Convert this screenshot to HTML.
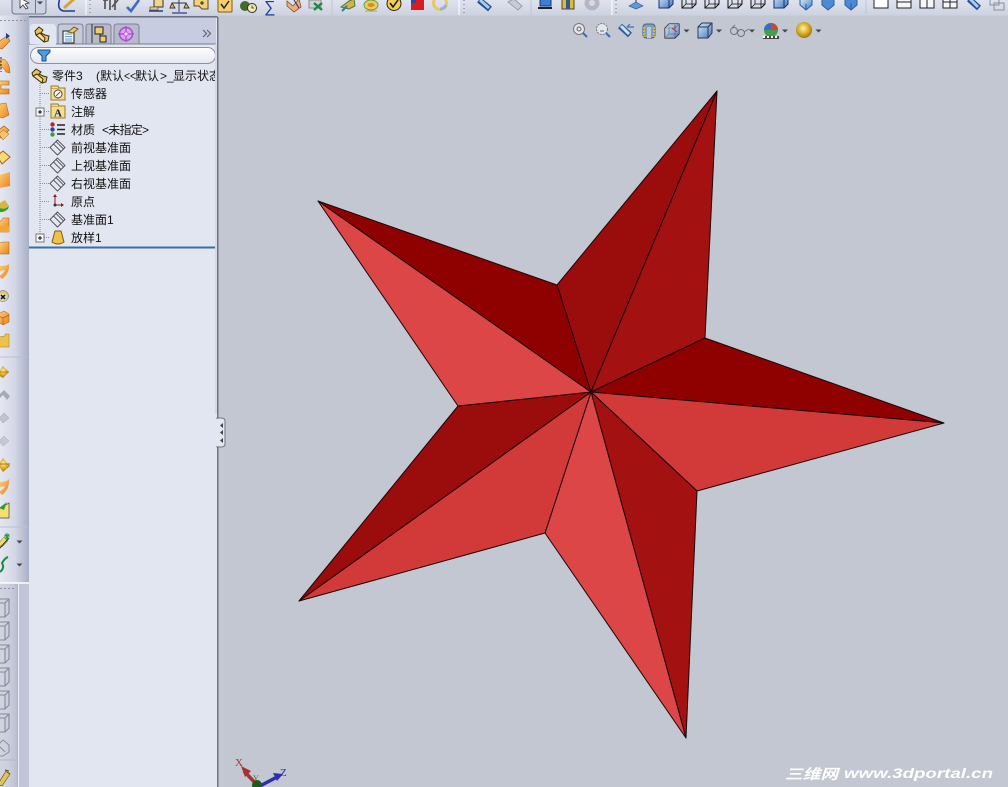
<!DOCTYPE html>
<html><head><meta charset="utf-8"><style>
html,body{margin:0;padding:0;width:1008px;height:787px;overflow:hidden;background:#c3c7d2}
svg{display:block}
text{font-family:"Liberation Sans","WenQuanYi Zen Hei","Noto Sans CJK SC",sans-serif;font-size:12px;fill:#111}
</style></head><body>
<svg width="1008" height="787" viewBox="0 0 1008 787" xmlns="http://www.w3.org/2000/svg">
<defs>
<clipPath id="treeclip"><rect x="29" y="60" width="187" height="190"/></clipPath>
<linearGradient id="side" x1="0" x2="1" y1="0" y2="0"><stop offset="0" stop-color="#e4e7f1"/><stop offset=".5" stop-color="#d4d8e6"/><stop offset="1" stop-color="#a9afc6"/></linearGradient>
<linearGradient id="top" x1="0" x2="0" y1="0" y2="1"><stop offset="0" stop-color="#dfe3ee"/><stop offset="1" stop-color="#cdd2e0"/></linearGradient>
<linearGradient id="bl" x1="0" x2="1" y1="0" y2="1"><stop offset="0" stop-color="#dbe8f8"/><stop offset="1" stop-color="#3f78c4"/></linearGradient>
<linearGradient id="or" x1="0" x2="1" y1="0" y2="1"><stop offset="0" stop-color="#ffd27a"/><stop offset="1" stop-color="#e8801a"/></linearGradient>
<radialGradient id="gold" cx=".45" cy=".4" r=".6"><stop offset="0" stop-color="#fff2a8"/><stop offset=".6" stop-color="#d8a722"/><stop offset="1" stop-color="#9e7612"/></radialGradient>
<linearGradient id="filt" x1="0" x2="0" y1="0" y2="1"><stop offset="0" stop-color="#fff"/><stop offset="1" stop-color="#e4e7f0"/></linearGradient>
<g id="cube"><path d="M-7,-3 L-3,-7 H7 V3 L3,7 H-7Z" fill="url(#bl)" stroke="#16306a"/><path d="M-7,-3 H3 V7 M3,-3 L7,-7" fill="none" stroke="#16306a"/></g>
<g id="wire"><path d="M-7,-3 L-3,-7 H7 V3 L3,7 H-7Z" fill="none" stroke="#111"/><path d="M-7,-3 H3 V7 M3,-3 L7,-7 M-3,-7 V3 H7 M-3,3 L-7,7" fill="none" stroke="#111" stroke-width=".8"/></g>
<g id="grey"><path d="M-9,-4 L-5,-8 H5 V6 L1,10 H-9Z M-9,-4 H1 V10 M1,-4 L5,-8" fill="none" stroke="#858a98" stroke-width="1.100"/></g>
<g id="plane"><path d="M0,-7.500 L7.500,0 L0,7.500 L-7.500,0Z M-4,-3.500 L3.500,4 M-1.500,-6 L6,1.500" fill="none" stroke="#333" stroke-width=".8"/></g>
<g id="oran"><path d="M-7,-2 L1,-8 L6,-4 L-1,4 L-6,3Z" fill="url(#or)" stroke="#a85f10" stroke-width=".7"/></g>
<g id="drop"><path d="M-3,-1.500 H3 L0,1.500Z" fill="#444"/></g>
</defs>

<rect width="1008" height="787" fill="#c3c7d2"/>

<!-- top toolbar -->
<rect width="1008" height="15.500" fill="url(#top)"/>
<rect x="12" y="-3" width="34" height="17" rx="3" fill="#ccd2e4" stroke="#6f7486"/>
<path d="M35.500,-2 V13" stroke="#6f7486"/>
<path d="M20,-2 L20,8 L23,5 L26,9 L28,8 L25,4 L29,3Z" fill="#fff" stroke="#333" stroke-width=".8"/>
<use href="#drop" x="40" y="3"/>
<path d="M60,-2 Q56,10 64,11 H75" fill="none" stroke="#1b3d9b" stroke-width="1.600"/>
<path d="M64,8 L74,-1" stroke="#d6a23a" stroke-width="3"/>
<path d="M86,0 V15" stroke="#fff" stroke-width="1"/><path d="M90,0 V15" stroke="#777" stroke-dasharray="1 3"/>
<path d="M103,0 L108,0 M110,0 V10 M105,0 V9 M115,0 V10 M118,0 L112,7" stroke="#555" stroke-width="1.700" fill="none"/>
<path d="M127,7 L131,11 L139,0" fill="none" stroke="#3e6cc0" stroke-width="2.600"/>
<rect x="154" y="-1" width="9" height="8" fill="#f1d484" stroke="#333"/><path d="M149,11 H163" stroke="#1b3d9b" stroke-width="1.500"/><path d="M150,7 H158 V10 H150Z" fill="#e9c870" stroke="#333" stroke-width=".6"/>
<path d="M172,3 H186 M179,-1 V12 M172,3 L170,8 H175Z M186,3 L184,8 H189Z" fill="#e5b85a" stroke="#333" stroke-width=".9"/><path d="M172,13 H187" stroke="#1b3d9b" stroke-width="1.200"/>
<path d="M194,-1 H208 V9 L202,9 L199,6 H194Z" fill="#f1d27b" stroke="#5c4a14"/><path d="M200,3 H204 M202,1 V5" stroke="#222"/>
<rect x="218" y="-2" width="14" height="14" rx="1" fill="#f4cf6c" stroke="#7d5d15"/><path d="M221,4 L224,8 L229,1" fill="none" stroke="#222" stroke-width="1.500"/>
<circle cx="245" cy="6" r="5" fill="#436b2a"/><circle cx="252" cy="8" r="4.500" fill="#f5e9b5" stroke="#333"/><path d="M252,5.500 V8 H254" stroke="#222" fill="none" stroke-width=".8"/>
<text x="264" y="12" style="font-size:16px;fill:#1b3d9b">∑</text>
<path d="M287,1 L293,6 L299,-1 L301,7 L294,12 L287,6Z" fill="#e8b07a" stroke="#8b4a2a" stroke-width=".8"/><path d="M294,0 L299,8" stroke="#2c2a7a"/>
<rect x="309" y="0" width="12" height="8" fill="#ccd2d8" stroke="#8e8e8e"/><path d="M314,3 L322,10 M322,3 L314,10" stroke="#1f8a3d" stroke-width="2.400"/>
<path d="M332,0 V15" stroke="#bfc4d2"/>
<path d="M341,7 L349,1 L354,-1 L355,6 L349,9Z" fill="#d7b04c" stroke="#4a7a34"/><path d="M342,11 L347,6" stroke="#2a7bb0" stroke-width="2"/>
<ellipse cx="371" cy="5" rx="7" ry="5" fill="#e6cf54" stroke="#6aa04a"/><ellipse cx="371" cy="5" rx="3.500" ry="2" fill="#e58330"/><path d="M365,11 H377" stroke="#b9a54a"/>
<circle cx="394" cy="3.500" r="7" fill="#f4cf4d" stroke="#222"/><path d="M390,3 L393,7 L398,0" fill="none" stroke="#111" stroke-width="1.500"/>
<rect x="411" y="-1" width="7" height="11" fill="#d81c24"/><rect x="418" y="-1" width="6" height="11" fill="#d81c24"/><rect x="411" y="-1" width="5" height="4" fill="#2c4a9a"/>
<circle cx="440" cy="3" r="6.500" fill="none" stroke="#e6c86a" stroke-width="3"/><path d="M440,9 A6.500,6.500 0 0,0 446,5" stroke="#8fb6d6" stroke-width="3" fill="none"/>
<path d="M459,0 V15" stroke="#fff"/><path d="M464,0 V15" stroke="#777" stroke-dasharray="1 3"/>
<path d="M479,0 L490,9" stroke="#1f4f94" stroke-width="6"/><path d="M480,0 L489,8" stroke="#a8d0ee" stroke-width="3"/>
<path d="M508,2 L514,-1 L522,6 L518,10 Z" fill="#c9ccd6" stroke="#9a9ea9"/>
<path d="M531,0 V15" stroke="#bfc4d2"/>
<rect x="540" y="-2" width="11" height="8" fill="#3d7fd0" stroke="#143a72"/><path d="M538,8 H552" stroke="#222" stroke-width="2"/>
<rect x="562" y="-2" width="12" height="11" fill="#e0b840" stroke="#4e4a20"/><rect x="566" y="-2" width="4" height="11" fill="#2a5c8f"/>
<circle cx="592" cy="3" r="7.500" fill="#b4b7c1"/><circle cx="592" cy="3" r="3" fill="#d8dae0"/>
<path d="M612,0 V15" stroke="#fff"/><path d="M616,0 V15" stroke="#777" stroke-dasharray="1 3"/>
<path d="M636,-1 V6" stroke="#333"/><path d="M629,6 L636,2 L643,6 L636,9Z" fill="#5e9ad8" stroke="#2f5d94" stroke-width=".7"/>
<use href="#cube" x="666" y="1"/><use href="#wire" x="689" y="1"/><use href="#wire" x="712" y="1"/><use href="#wire" x="735" y="1"/><use href="#wire" x="758" y="1"/><use href="#cube" x="781" y="1"/>
<path d="M800,-1 H812 V5 L806,10 L800,5Z M806,4 V10" fill="url(#bl)" stroke="#2b5da2"/>
<path d="M822,-1 H834 V5 L828,10 L822,5Z" fill="#4d8ad2" stroke="#2b5da2"/>
<path d="M845,-1 H857 V5 L851,10 L845,5Z M851,3 V10" fill="#4d8ad2" stroke="#2b5da2"/>
<path d="M866,0 V14" stroke="#bfc4d2"/>
<rect x="874" y="-3" width="14" height="11" fill="#fff" stroke="#222"/>
<rect x="897" y="-3" width="14" height="11" fill="#f4f6fa" stroke="#222"/><path d="M897,2 H911" stroke="#222"/>
<rect x="920" y="-3" width="14" height="11" fill="#f4f6fa" stroke="#222"/><path d="M927,-3 V8" stroke="#222"/>
<rect x="943" y="-3" width="14" height="11" fill="#f4f6fa" stroke="#222"/><path d="M950,-3 V8 M943,2 H957" stroke="#222"/>
<path d="M969,-1 L979,8" stroke="#1f4f94" stroke-width="6"/><path d="M970,-1 L978,7" stroke="#a8d0ee" stroke-width="3"/>
<rect x="990" y="-2" width="9" height="7" fill="none" stroke="#8a8e9b"/><rect x="994" y="3" width="10" height="7" fill="none" stroke="#8a8e9b"/>

<!-- left strip -->
<rect x="0" y="15.500" width="29" height="568" fill="url(#side)"/>
<path d="M0,20.500 H26" stroke="#8d92a4" stroke-dasharray="2 2"/>
<g>
<path d="M-2,42 L7,36 L10,41 L2,49 L-2,48Z" fill="url(#or)" stroke="#a85f10" stroke-width=".6"/><path d="M6,33 L10,36 L6,39Z" fill="#1b3d9b"/>
<path d="M0,60 L4,59 Q10,63 10,73 L6,72 Q4,67 0,67Z" fill="url(#or)" stroke="#a85f10" stroke-width=".5"/><path d="M1,57 V72" stroke="#222" stroke-dasharray="2 1.500"/>
<path d="M-1,81 H9 V85 H1 V89 H9 V94 H-1Z" fill="url(#or)" stroke="#a85f10" stroke-width=".6"/>
<path d="M0,104 L6,103 L9,115 L3,118 L-2,117Z" fill="url(#or)" stroke="#a85f10" stroke-width=".5"/>
<use href="#oran" x="3" y="134"/><path d="M-1,134 L3,130 L9,134 L3,140Z" fill="#f5c56f" stroke="#a85f10" stroke-width=".5"/>
<path d="M-3,156 L3,151 L10,157 L2,164Z" fill="#f7dc7a" stroke="#a85f10"/>
<path d="M-1,175 L10,172 V186 L-1,188Z" fill="url(#or)"/>
<path d="M-2,204 L5,200 L9,206 Q4,212 -2,210Z" fill="#d8b645"/><path d="M-2,207 Q4,211 9,206 L8,209 Q2,214 -2,211Z" fill="#2fa12f"/>
<path d="M-1,223 L3,218 H9 V232 H-1Z" fill="url(#or)" stroke="#a85f10" stroke-width=".5"/><rect x="0" y="226" width="9" height="6" fill="#f2a63a"/>
<path d="M-1,243 L4,242 H9 V254 H-1Z" fill="url(#or)" stroke="#a85f10" stroke-width=".5"/>
<path d="M0,266 Q7,266 9,264 Q10,273 2,279 L-1,276 Q4,273 5,270 L0,271Z" fill="url(#or)"/>
<circle cx="3" cy="296" r="5.500" fill="#e4c84a" stroke="#666" stroke-width=".5"/><circle cx="3" cy="297" r="4" fill="#d6d6d6"/><path d="M1,295 L5,299 M5,295 L1,299" stroke="#111" stroke-width="1.500"/>
<path d="M-2,314 L4,311 L9,314 V322 L3,325 L-2,322Z" fill="url(#or)" stroke="#a85f10" stroke-width=".5"/><path d="M-2,316 L3,318 L9,315 M3,318 V325" stroke="#a85f10" stroke-width=".7" fill="none"/>
<path d="M-1,337 L5,336 V334 H9 V347 H-1Z" fill="#eec24a" stroke="#a87a10" stroke-width=".5"/>
<path d="M0,357 H28" stroke="#bcc0ce"/>
<path d="M-2,372 L3,366 L9,372 L3,378 L-2,375Z" fill="url(#gold)"/><path d="M-2,372 H9" stroke="#c57a15"/>
<path d="M-1,395 L4,390 L10,396 L7,400 L3,395 L0,398Z" fill="#a6aab6"/>
<path d="M-1,418 L4,413 L9,418 L3,423Z" fill="#c1c4ce" stroke="#9a9ea9" stroke-width=".5"/>
<path d="M-1,441 L4,436 L9,441 L3,446Z" fill="#c6c9d3" stroke="#a4a8b3" stroke-width=".5"/>
<path d="M-2,465 L3,458 L8,464 L10,466 L3,472Z" fill="url(#gold)"/><path d="M-2,464 H10" stroke="#b56c12"/>
<path d="M0,482 Q7,482 9,479 Q10,489 2,495 L-1,492 Q4,489 5,486 L0,487Z" fill="url(#or)"/>
<path d="M-1,509 L9,503 V518 H-1Z" fill="#f6de70" stroke="#444" stroke-width=".7"/><path d="M-1,508 L7,502 L4,510Z" fill="#2aa12a"/>
<path d="M0,527 H28" stroke="#bcc0ce"/>
<path d="M-2,544 L4,537 L8,541 L2,547Z" fill="#f2dc5a" stroke="#666" stroke-width=".5"/><path d="M-1,549 L9,538" stroke="#222"/>
<path d="M7,533 V540 M4,536 H10 M5,534 L9,539 M9,534 L5,539" stroke="#1a9a2a"/>
<use href="#drop" x="19.500" y="542"/>
<path d="M0,572 Q5,568 2,563 Q5,558 8,557 " fill="none" stroke="#1d8a3c" stroke-width="2"/>
<use href="#drop" x="19.500" y="565"/>
</g>
<path d="M0,583 H29" stroke="#fff" stroke-width="1.500"/>
<rect x="0" y="584" width="18" height="203" fill="url(#side)"/><rect x="0" y="584" width="17" height="203" fill="#c4c8d6" opacity=".6"/>
<rect x="18" y="584" width="1" height="203" fill="#eef0f6"/>
<rect x="19" y="584" width="10" height="203" fill="#c0c5d7"/>
<path d="M0,588.500 H14" stroke="#8d92a4" stroke-dasharray="2 2"/>
<use href="#grey" x="4" y="607"/><use href="#grey" x="4" y="630"/><use href="#grey" x="4" y="653"/><use href="#grey" x="4" y="676"/><use href="#grey" x="4" y="699"/><use href="#grey" x="4" y="722"/>
<path d="M-2,745 L3,740 L9,745 V752 L3,756 H-2Z M-2,745 L5,752" fill="none" stroke="#8a8e9b"/>
<path d="M0,760 H16" stroke="#b0b4c2"/>
<path d="M-2,784 L6,771 L10,774 L2,786Z" fill="#e6c35a" stroke="#5a4a15" stroke-width=".6"/><path d="M5,770 L9,771 M7,772 L10,774" stroke="#5a4a15"/>

<!-- panel -->
<rect x="29" y="18" width="188" height="769" fill="#e2e6f0"/>
<rect x="29" y="16" width="188.500" height="1.500" fill="#6b7083"/>
<rect x="29" y="18" width="187" height="26" fill="#c8cce0"/>
<rect x="29" y="43.500" width="187" height="1" fill="#777c90"/>
<path d="M30,44 V27 Q30,24 33,24 H52 Q56,24 56,28 V45Z" fill="#e2e6f0"/>
<path d="M58,44 V27 Q58,24 61,24 H80 Q83,24 83,27 V44Z" fill="#c5c9d8" stroke="#7d8294"/>
<path d="M86,44 V27 Q86,24 89,24 H108 Q111,24 111,27 V44Z" fill="#b6bacb" stroke="#7d8294"/>
<path d="M114,44 V27 Q114,24 117,24 H136 Q139,24 139,27 V44Z" fill="#b6bacb" stroke="#7d8294"/>
<!-- tab icons -->
<g stroke="#3a2f10" stroke-width="1">
<path d="M35,31 L39,27 L43,30 L41,33 L45,35 L49,36 L48,41 L44,42 L36,35Z" fill="#e8c25a"/>
<path d="M36,35 L44,42 L45,38 L40,33Z" fill="#f5dc8a"/>
</g>
<rect x="63" y="31" width="11" height="12" fill="#eef5ff" stroke="#222"/><path d="M65,34 H72 M65,36.500 H72 M65,39 H72 M65,41 H72" stroke="#2f7fcc" stroke-width=".8"/>
<path d="M68,32 L74,27 L78,29 L73,33Z" fill="#e6c878" stroke="#7a5f20"/>
<path d="M92,24 V43" stroke="#333"/>
<rect x="95" y="27" width="8" height="7" fill="#f0cc6a" stroke="#222"/><path d="M100,34 V38 H103" fill="none" stroke="#222"/><rect x="100" y="36" width="6" height="6" fill="#f0cc6a" stroke="#222"/>
<circle cx="126" cy="34" r="6.500" fill="#d8a4ee" stroke="#b04ad0" stroke-width="1.500"/><path d="M118,34 H134 M126,26 V42" stroke="#b04ad0" stroke-width="1.300"/><circle cx="126" cy="34" r="2" fill="#f2dcfa" stroke="#b04ad0" stroke-width=".7"/>
<path d="M203,30 L206.500,33.500 L203,37 M207,30 L210.500,33.500 L207,37" fill="none" stroke="#666" stroke-width="1.200"/>
<!-- filter -->
<rect x="30.500" y="47.500" width="185" height="16" rx="8" fill="url(#filt)" stroke="#8c90a0"/>
<path d="M38,50 H50 V52 L46,56 V61 H42 V56 L38,52Z" fill="#4f9ce0" stroke="#1b4a8a"/>
<!-- tree lines -->
<path d="M40,83 V238 M40,93.500 H50 M40,111.500 H50 M40,129.500 H50 M40,147.500 H50 M40,165.500 H50 M40,183.500 H50 M40,201.500 H50 M40,219.500 H50 M40,237.500 H50" stroke="#8a8e9b" stroke-dasharray="1 1" fill="none"/>
<rect x="36" y="108" width="8" height="8" fill="#f6f7fa" stroke="#777"/><path d="M38,112 H42 M40,110 V114" stroke="#111"/>
<rect x="36" y="234" width="8" height="8" fill="#f6f7fa" stroke="#777"/><path d="M38,238 H42 M40,236 V240" stroke="#111"/>
<!-- tree icons -->
<g stroke="#3a2f10" stroke-width="1">
<path d="M32,73 L36,69 L41,72 L39,74 L43,76 L47,77 L46,82 L42,83 L33,76Z" fill="#e8c25a"/>
<path d="M33,76 L42,83 L43,79 L37,74Z" fill="#f5dc8a"/>
</g>
<rect x="51" y="88" width="14" height="12" fill="#f6dd90" stroke="#9a7a1e"/><path d="M51,88 V86 H58 L59,88" fill="#f6dd90" stroke="#9a7a1e"/><circle cx="58" cy="94" r="4" fill="#fff" stroke="#444"/><path d="M56,96 L60,92" stroke="#a33"/>
<rect x="51" y="106" width="14" height="12" fill="#f6dd90" stroke="#9a7a1e"/><path d="M51,106 V104 H58 L59,106" fill="#f6dd90" stroke="#9a7a1e"/><text x="54" y="116.500" style="font-size:11px;font-weight:bold;font-family:'Liberation Serif',serif;fill:#14245c">A</text>
<circle cx="52.500" cy="124.500" r="2.200" fill="#b6232a"/><circle cx="52.500" cy="129.500" r="2.200" fill="#2b3fa0"/><circle cx="52.500" cy="134.500" r="2.200" fill="#2fa03a"/>
<path d="M57,125 H65 M57,129.500 H65 M57,134 H65" stroke="#222" stroke-width="1.400"/>
<use href="#plane" x="57.500" y="147.500"/><use href="#plane" x="57.500" y="165.500"/><use href="#plane" x="57.500" y="183.500"/><use href="#plane" x="57.500" y="219.500"/>
<path d="M55,195 V205 H63" fill="none" stroke="#8e1a1a" stroke-width="1"/><path d="M53,197 L55,194 L57,197Z" fill="#8e1a1a"/><path d="M61,203 L64,205 L61,207Z" fill="#8e1a1a"/><circle cx="55" cy="205" r="1.500" fill="#333"/>
<path d="M55,231 H61 L64,242 Q58,246 52,242Z" fill="#eec24a" stroke="#7a5a14"/>
<!-- tree text -->
<g clip-path="url(#treeclip)">
<text x="52" y="80">零件3</text>
<text x="96" y="80" textLength="28" lengthAdjust="spacingAndGlyphs">(默认</text>
<text x="124" y="80" textLength="12" lengthAdjust="spacingAndGlyphs">&lt;&lt;</text>
<text x="135" y="80">默认</text>
<text x="160" y="80">&gt;</text>
<text x="167" y="80">_</text>
<text x="173" y="80">显示状态</text>
<text x="71" y="98">传感器</text>
<text x="71" y="116">注解</text>
<text x="71" y="134">材质</text>
<text x="102" y="134" textLength="47" lengthAdjust="spacing">&lt;未指定&gt;</text>
<text x="71" y="152">前视基准面</text>
<text x="71" y="170">上视基准面</text>
<text x="71" y="188">右视基准面</text>
<text x="71" y="206">原点</text>
<text x="71" y="224">基准面1</text>
<text x="71" y="242">放样1</text>
</g>
<rect x="216" y="18" width="1.500" height="230" fill="#e2e6f0"/>
<rect x="29" y="246.500" width="187" height="2" fill="#3a6ea8"/>
<rect x="215" y="44" width="2" height="370" fill="#d5d8e4"/>
<!-- divider -->
<rect x="217" y="17" width="1.500" height="770" fill="#6f7484"/>
<path d="M217,418 H221 Q225,418 225,421 V444 Q225,447 221,447 H217Z" fill="#e2e6f0" stroke="#6f7484"/>
<rect x="216" y="419" width="3" height="27" fill="#e2e6f0"/>
<path d="M223,423 L220,425.500 L223,428Z M223,430 L220,432.500 L223,435Z M223,438 L220,440.500 L223,443Z" fill="#444"/>

<!-- heads-up toolbar -->
<g>
<circle cx="579" cy="29" r="5.500" fill="#e4e6ee" stroke="#777"/><circle cx="579" cy="29" r="2" fill="none" stroke="#666"/><path d="M583,33 L587,37" stroke="#3e6cc0" stroke-width="2"/>
<circle cx="602" cy="29" r="5.500" fill="#e4e6ee" stroke="#777" stroke-dasharray="2 1"/><path d="M606,33 L610,37" stroke="#3e6cc0" stroke-width="2"/><path d="M600,31 H604" stroke="#666"/>
<path d="M620,26 L630,35" stroke="#2f5d94" stroke-width="6"/><path d="M621,26 L629,34" stroke="#cbe2f4" stroke-width="3"/><path d="M627,27 H634 M627,27 L630,24" stroke="#3e6cc0" stroke-width="1.200" fill="none"/>
<rect x="643" y="24" width="12" height="14" rx="3" fill="#7ba0c4" stroke="#4e5c72"/><rect x="647" y="27" width="4" height="11" fill="#c3c7d2"/><path d="M644,27 V37 M654,27 V37" stroke="#d8b83c" stroke-width="2" stroke-dasharray="2 1"/>
<use href="#wire" x="672" y="31"/><path d="M665,28 L669,24 H679 V34 L675,38 H665Z" fill="url(#bl)" opacity=".7"/><path d="M672,28 L677,32 M675,25 V29" stroke="#a33"/>
<use href="#drop" x="686.500" y="31"/>
<path d="M698,27 L702,23 H712 V33 L708,38 H698Z" fill="url(#bl)" stroke="#2a3a52"/><path d="M698,27 H708 V38 M708,27 L712,23" fill="none" stroke="#2a3a52"/>
<use href="#drop" x="719" y="31"/>
<circle cx="734" cy="31" r="3.500" fill="none" stroke="#707482"/><circle cx="741" cy="33" r="3.500" fill="none" stroke="#707482"/><path d="M737,30 L739,31 M744,32 L749,29 M732,28 L735,25" stroke="#707482" fill="none"/>
<use href="#drop" x="752" y="31"/>
<circle cx="771" cy="30" r="7" fill="#3fa14a"/><path d="M771,30 V23 A7,7 0 0,1 778,30Z" fill="#d0453a"/><path d="M771,30 V23 A7,7 0 0,0 764,30Z" fill="#3d6cc4"/>
<path d="M763,36 H779 V39 H763Z" fill="#444"/><path d="M763,37 H779" stroke="#fff" stroke-dasharray="2 2" stroke-width="2"/>
<use href="#drop" x="785" y="31"/>
<circle cx="804" cy="30" r="8" fill="url(#gold)"/>
<use href="#drop" x="818.500" y="31"/>
</g>

<!-- star -->
<g stroke="#1a0606" stroke-width="1" stroke-linejoin="round">
<polygon points="591,392 557,285 717,91" fill="#9b0c0c"/>
<polygon points="591,392 717,91 705,338" fill="#a41111"/>
<polygon points="591,392 705,338 944,423" fill="#8f0000"/>
<polygon points="591,392 944,423 697,491" fill="#d23a3a"/>
<polygon points="591,392 697,491 686,738" fill="#a41111"/>
<polygon points="591,392 686,738 545,533" fill="#dc4646"/>
<polygon points="591,392 545,533 299,601" fill="#d23a3a"/>
<polygon points="591,392 299,601 458,406" fill="#9b0c0c"/>
<polygon points="591,392 458,406 318,201" fill="#dc4646"/>
<polygon points="591,392 318,201 557,285" fill="#8f0000"/>
</g>

<!-- triad -->
<path d="M257,785 L244,771" stroke="#a83030" stroke-width="3.500"/><path d="M241,766 L251,771 L245,777Z" fill="#a83030"/>
<path d="M260,786 L277,777" stroke="#2a30b0" stroke-width="3.500"/><path d="M283,774 L273,773 L277,781Z" fill="#2a30b0"/>
<circle cx="257" cy="785" r="5" fill="#1e5a1e"/>
<text x="235" y="766" style="font-size:11px;font-family:'Liberation Serif',serif;fill:#b03030">X</text>
<text x="280" y="776" style="font-size:11px;font-family:'Liberation Serif',serif;fill:#2a30b0">Z</text>
<text x="253" y="781" style="font-size:8px;font-family:'Liberation Serif',serif;fill:#2a7a2a">Y</text>

<!-- watermark -->
<text x="785" y="779" textLength="53" lengthAdjust="spacingAndGlyphs" style="font-size:14px;font-weight:bold;font-style:italic;fill:#fff">三维网</text>
<text x="844" y="778" textLength="149" lengthAdjust="spacingAndGlyphs" style="font-size:14px;font-weight:bold;font-style:italic;fill:#fff">www.3dportal.cn</text>
</svg>
</body></html>
